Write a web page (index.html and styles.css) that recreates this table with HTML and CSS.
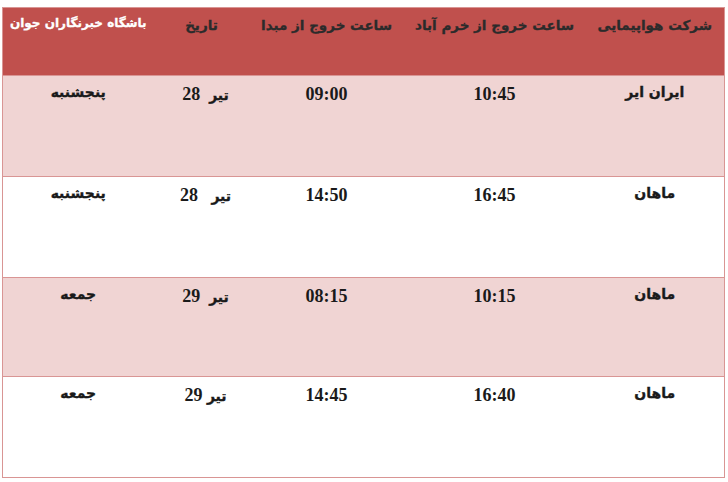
FILE: index.html
```html
<!DOCTYPE html>
<html lang="fa" dir="rtl">
<head>
<meta charset="utf-8">
<link rel="stylesheet" href="styles.css">
</head>
<body>
<div class="page">
<table class="flights">
  <colgroup>
    <col class="c1"><col class="c2"><col class="c3"><col class="c4"><col class="c5">
  </colgroup>
  <thead>
    <tr class="head">
      <th>شرکت هواپیمایی</th>
      <th>ساعت خروج از خرم آباد</th>
      <th>ساعت خروج از مبدا</th>
      <th>تاریخ</th>
      <th class="brand">باشگاه خبرنگاران جوان</th>
    </tr>
  </thead>
  <tbody>
    <tr class="shade r1">
      <td class="fa">ایران ایر</td>
      <td class="num">10:45</td>
      <td class="num">09:00</td>
      <td class="date"><span class="fa">تیر</span>&nbsp; <span class="num">28</span></td>
      <td class="fa">پنجشنبه</td>
    </tr>
    <tr class="r2">
      <td class="fa">ماهان</td>
      <td class="num">16:45</td>
      <td class="num">14:50</td>
      <td class="date"><span class="fa">تیر</span>&nbsp;&nbsp; <span class="num">28</span></td>
      <td class="fa">پنجشنبه</td>
    </tr>
    <tr class="shade r3">
      <td class="fa">ماهان</td>
      <td class="num">10:15</td>
      <td class="num">08:15</td>
      <td class="date"><span class="fa">تیر</span>&nbsp; <span class="num">29</span></td>
      <td class="fa">جمعه</td>
    </tr>
    <tr class="r4">
      <td class="fa">ماهان</td>
      <td class="num">16:40</td>
      <td class="num">14:45</td>
      <td class="date"><span class="fa">تیر</span> <span class="num">29</span></td>
      <td class="fa">جمعه</td>
    </tr>
  </tbody>
</table>
</div>
</body>
</html>
```
FILE: styles.css
```css
html, body {
  margin: 0;
  padding: 0;
  background: #ffffff;
}
.page {
  padding: 7px 3px 0 4px;
}
.flights {
  width: 722px;
  border-collapse: collapse;
  table-layout: fixed;
  border: 1px solid #d99594;
  font-family: "Liberation Serif", "DejaVu Sans", serif;
  color: #1a1a1a;
}
.c1 { width: 139px; }
.c2 { width: 182px; }
.c3 { width: 154px; }
.c4 { width: 96px; }
.c5 { width: 151px; }

.head {
  background: #c0504d;
  height: 68px;
}
.head th {
  vertical-align: top;
  text-align: center;
  font-family: "DejaVu Sans", sans-serif;
  font-weight: bold;
  font-size: 13.5px;
  color: #2b2b2b;
  padding: 9px 2px 0;
  white-space: nowrap;
  -webkit-text-stroke: 0.3px #2b2b2b;
}
.head th.brand {
  color: #ffffff;
  font-size: 12px;
  padding-top: 8px;
  -webkit-text-stroke: 0.3px #ffffff;
}
tbody tr {
  height: 101px;
  border-top: 1px solid #d99594;
}
tbody tr.r3 { height: 99px; }
tbody tr.shade { background: #f0d4d3; }
tbody td {
  vertical-align: top;
  text-align: center;
  padding: 8px 2px 0;
  font-weight: bold;
  white-space: nowrap;
}
.fa {
  font-family: "DejaVu Sans", sans-serif;
  font-size: 14px;
  font-weight: bold;
  letter-spacing: -0.3px;
  -webkit-text-stroke: 0.35px #1a1a1a;
}
.num {
  font-family: "Liberation Serif", serif;
  font-size: 18px;
  font-weight: bold;
}
td.date {
  font-size: 18px;
  padding-left: 10px;
}
```
